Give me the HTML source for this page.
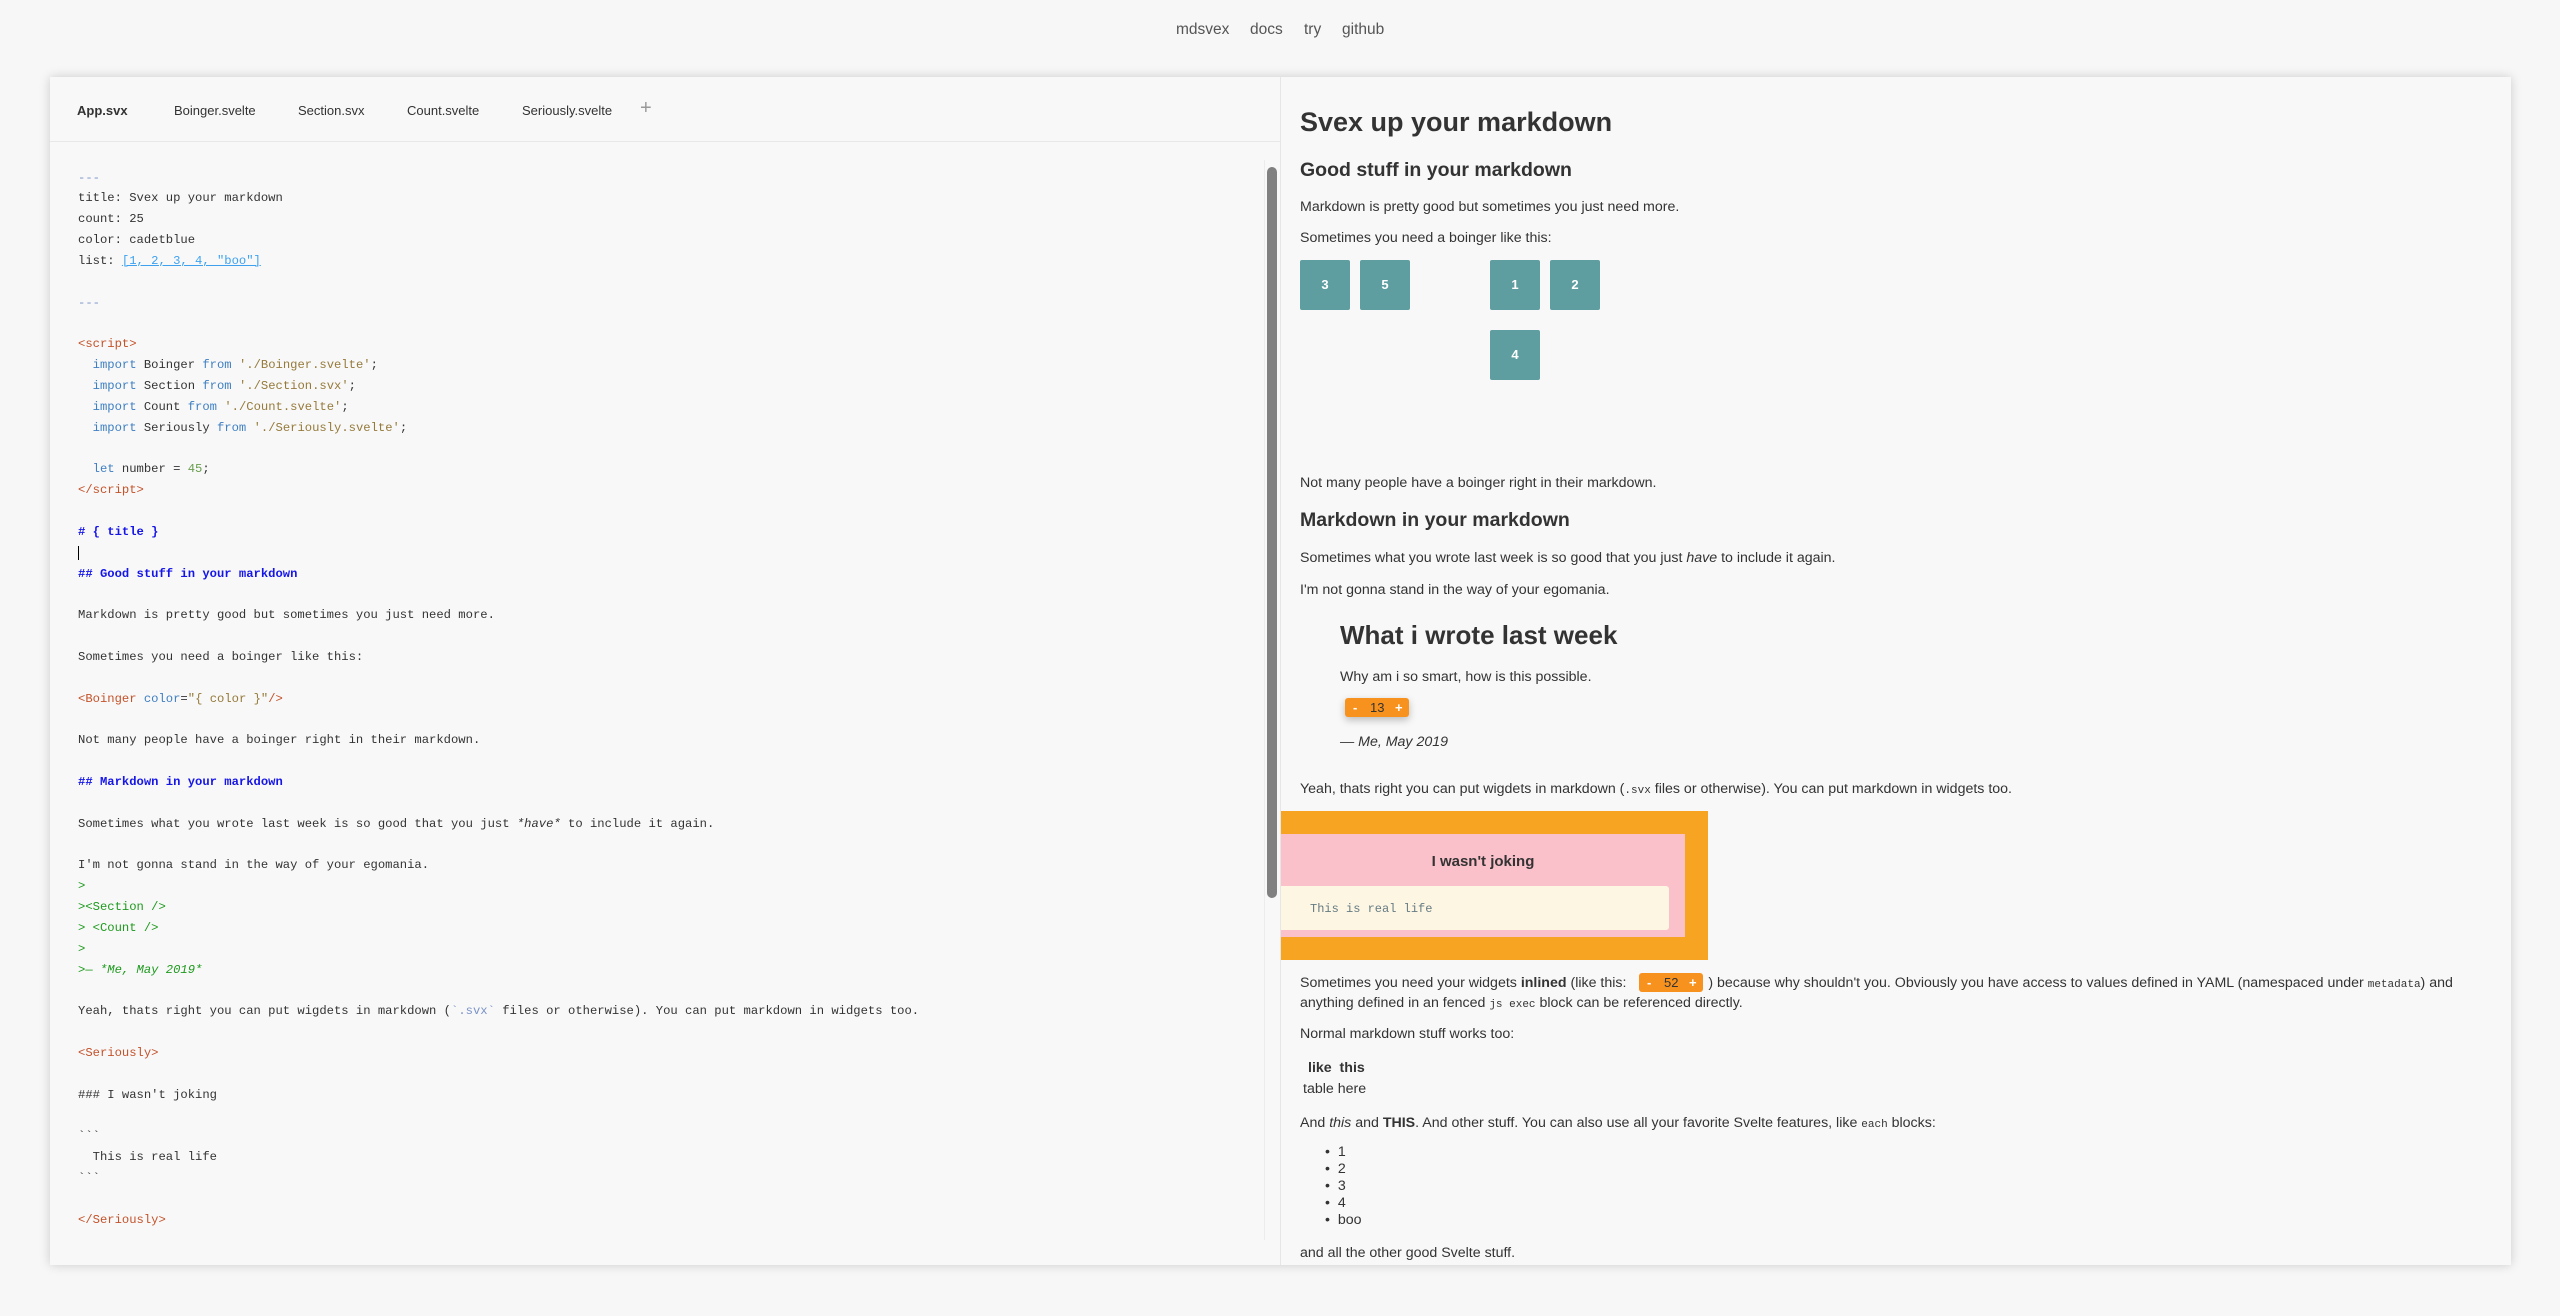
<!DOCTYPE html>
<html><head><meta charset="utf-8"><style>
*{margin:0;padding:0;box-sizing:border-box}
html,body{width:2560px;height:1316px;background:#f7f7f7;overflow:hidden;font-family:"Liberation Sans",sans-serif;color:#333}
.nav{position:absolute;top:20px;font-size:15.5px;color:#555;line-height:20px}
.panel{position:absolute;left:50px;top:77px;width:2461px;height:1188px;background:#f8f8f8;box-shadow:0 0 10px rgba(0,0,0,.18)}
.divider{position:absolute;left:1280px;top:77px;width:1px;height:1188px;background:#e6e6e6}
.tabline{position:absolute;left:50px;top:141px;width:1230px;height:1px;background:#e8e8e8}
.tab{position:absolute;top:102px;font-size:13px;line-height:18px;color:#333}
pre{position:absolute;left:78px;top:167.6px;font-family:"Liberation Mono",monospace;font-size:12.2px;line-height:20.85px;color:#333}
.d{color:#7a93c8}.lk{color:#3ea1f0;text-decoration:underline}.tg{color:#c4522a}.kw{color:#3f7fc2}.st{color:#957a3a}.nm{color:#6a9e4f}
.hd{color:#1515e8;font-weight:bold}.q{color:#1e9a1e}.at{color:#3f7fc2}
.scroll{position:absolute;left:1267px;top:167px;width:10px;height:731px;background:#808080;border-radius:5px}
.track{position:absolute;left:1264px;top:160px;width:1px;height:1080px;background:#ececec}
.r{position:absolute;left:1300px;font-size:14.2px;line-height:20px;white-space:nowrap}
.h1{font-size:27px;font-weight:bold;line-height:34px}
.h2{font-size:19.5px;font-weight:bold;line-height:26px}
.box{position:absolute;width:50px;height:50px;background:#5f9ea0;border-radius:2px;color:#fff;font-weight:bold;font-size:13px;text-align:center;line-height:50px}
.cnt{position:absolute;height:19px;width:64px;background:#f8921f;border-radius:3px;box-shadow:0 3px 8px rgba(0,0,0,.25);font-size:13px;line-height:19px;color:#333}
.cnt b{color:#fff;position:absolute;top:0}
code{font-family:"Liberation Mono",monospace;font-size:11px}
</style></head><body>
<div class="nav" style="left:1176px">mdsvex</div>
<div class="nav" style="left:1250px">docs</div>
<div class="nav" style="left:1304px">try</div>
<div class="nav" style="left:1342px">github</div>

<div class="panel"></div>
<div class="divider"></div>
<div class="tabline"></div>
<div class="tab" style="left:77px;font-weight:bold">App.svx</div>
<div class="tab" style="left:174px">Boinger.svelte</div>
<div class="tab" style="left:298px">Section.svx</div>
<div class="tab" style="left:407px">Count.svelte</div>
<div class="tab" style="left:522px">Seriously.svelte</div>
<div class="tab" style="left:640px;font-size:20px;color:#999;top:99px">+</div>
<div class="track"></div>
<div class="scroll"></div>

<pre><span class="d">---</span>
title: Svex up your markdown
count: 25
color: cadetblue
list: <span class="lk">[1, 2, 3, 4, "boo"]</span>

<span class="d">---</span>

<span class="tg">&lt;script&gt;</span>
  <span class="kw">import</span> Boinger <span class="kw">from</span> <span class="st">'./Boinger.svelte'</span>;
  <span class="kw">import</span> Section <span class="kw">from</span> <span class="st">'./Section.svx'</span>;
  <span class="kw">import</span> Count <span class="kw">from</span> <span class="st">'./Count.svelte'</span>;
  <span class="kw">import</span> Seriously <span class="kw">from</span> <span class="st">'./Seriously.svelte'</span>;

  <span class="kw">let</span> number = <span class="nm">45</span>;
<span class="tg">&lt;/script&gt;</span>

<span class="hd"># { title }</span>
<span style="border-left:1px solid #000">&#8203;</span>
<span class="hd">## Good stuff in your markdown</span>

Markdown is pretty good but sometimes you just need more.

Sometimes you need a boinger like this:

<span class="tg">&lt;Boinger</span> <span class="at">color</span>=<span class="st">"{ color }"</span><span class="tg">/&gt;</span>

Not many people have a boinger right in their markdown.

<span class="hd">## Markdown in your markdown</span>

Sometimes what you wrote last week is so good that you just <i>*have*</i> to include it again.

I'm not gonna stand in the way of your egomania.
<span class="q">&gt;</span>
<span class="q">&gt;&lt;Section /&gt;</span>
<span class="q">&gt; &lt;Count /&gt;</span>
<span class="q">&gt;</span>
<span class="q">&gt;— <i>*Me, May 2019*</i></span>

Yeah, thats right you can put wigdets in markdown (<span class="d">&#96;.svx&#96;</span> files or otherwise). You can put markdown in widgets too.

<span class="tg">&lt;Seriously&gt;</span>

### I wasn't joking

&#96;&#96;&#96;
  This is real life
&#96;&#96;&#96;

<span class="tg">&lt;/Seriously&gt;</span></pre>

<div class="r h1" style="top:105px">Svex up your markdown</div>
<div class="r h2" style="top:157px">Good stuff in your markdown</div>
<div class="r" style="top:197px">Markdown is pretty good but sometimes you just need more.</div>
<div class="r" style="top:228px">Sometimes you need a boinger like this:</div>
<div class="box" style="left:1300px;top:260px">3</div>
<div class="box" style="left:1360px;top:260px">5</div>
<div class="box" style="left:1490px;top:260px">1</div>
<div class="box" style="left:1550px;top:260px">2</div>
<div class="box" style="left:1490px;top:330px">4</div>
<div class="r" style="top:473px">Not many people have a boinger right in their markdown.</div>
<div class="r h2" style="top:507px">Markdown in your markdown</div>
<div class="r" style="top:548px">Sometimes what you wrote last week is so good that you just <i>have</i> to include it again.</div>
<div class="r" style="top:580px">I'm not gonna stand in the way of your egomania.</div>
<div class="r h1" style="left:1340px;top:618px;font-size:26px">What i wrote last week</div>
<div class="r" style="left:1340px;top:667px">Why am i so smart, how is this possible.</div>
<div class="cnt" style="left:1345px;top:698px"><b style="left:8px">-</b><span style="position:absolute;left:25px">13</span><b style="left:50px">+</b></div>
<div class="r" style="left:1340px;top:732px"><i>— Me, May 2019</i></div>
<div class="r" style="top:779px">Yeah, thats right you can put wigdets in markdown (<code>.svx</code> files or otherwise). You can put markdown in widgets too.</div>
<div style="position:absolute;left:1281px;top:811px;width:427px;height:149px;background:#f8a423"></div>
<div style="position:absolute;left:1281px;top:834px;width:404px;height:103px;background:#fbc1cb"></div>
<div style="position:absolute;left:1281px;top:851px;width:404px;text-align:center;font-weight:bold;font-size:15px;line-height:22px">I wasn't joking</div>
<div style="position:absolute;left:1281px;top:886px;width:388px;height:44px;background:#fdf6e3;border-radius:0 3px 3px 0"></div>
<div style="position:absolute;left:1310px;top:900px;font-family:'Liberation Mono',monospace;font-size:12px;line-height:18px;color:#657b83">This is real life</div>
<div class="r" style="top:973px">Sometimes you need your widgets <b>inlined</b> (like this: <span style="display:inline-block;width:74px"></span> ) because why shouldn't you. Obviously you have access to values defined in YAML (namespaced under <code>metadata</code>) and</div>
<div class="cnt" style="left:1639px;top:973px;box-shadow:none"><b style="left:8px">-</b><span style="position:absolute;left:25px">52</span><b style="left:50px">+</b></div>
<div class="r" style="top:993px">anything defined in an fenced <code>js exec</code> block can be referenced directly.</div>
<div class="r" style="top:1024px">Normal markdown stuff works too:</div>
<div class="r" style="left:1308px;top:1058px;font-weight:bold">like&nbsp;&nbsp;this</div>
<div class="r" style="left:1303px;top:1079px">table here</div>
<div class="r" style="top:1113px">And <i>this</i> and <b>THIS</b>. And other stuff. You can also use all your favorite Svelte features, like <code>each</code> blocks:</div>
<div class="r" style="left:1325px;top:1144px;line-height:17px">•&nbsp;&nbsp;1<br>•&nbsp;&nbsp;2<br>•&nbsp;&nbsp;3<br>•&nbsp;&nbsp;4<br>•&nbsp;&nbsp;boo</div>
<div class="r" style="top:1243px">and all the other good Svelte stuff.</div>
</body></html>
